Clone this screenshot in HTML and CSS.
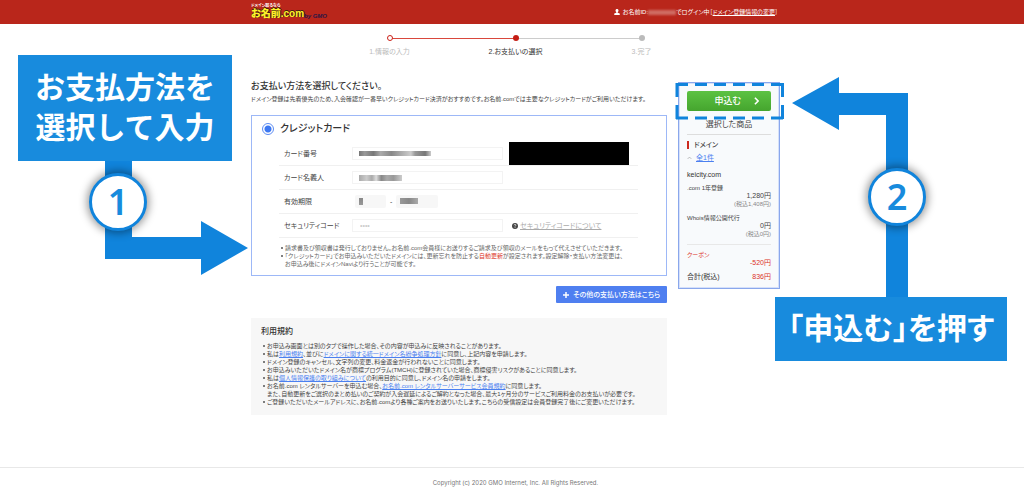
FILE: index.html
```html
<!DOCTYPE html>
<html lang="ja">
<head>
<meta charset="utf-8">
<meta name="viewport" content="width=device-width, initial-scale=1">
<title>お支払いの選択 | お名前.com</title>
<link rel="stylesheet" href="styles.css">
</head>
<body>
<header class="site-header">
  <div class="wrap header-row">
    <a class="logo" href="#">
      <span class="logo-tag">ドメイン取るなら</span>
      <span class="logo-line"><span class="logo-name">お名前.com</span><span class="logo-by">by GMO</span></span>
    </a>
    <p class="login">
      <svg class="person" viewBox="0 0 12 12" aria-hidden="true"><path d="M6 0c2 0 3 1.400 3 3.200C9 4.800 8.300 6 7.400 6.600v.9L11.500 9.200V12H.5V9.200L4.600 7.500v-.9C3.700 6 3 4.800 3 3.200 3 1.400 4 0 6 0z"/></svg>
      <span>お名前ID:</span><span class="masked-id"></span><span>でログイン中［<a href="#">ドメイン登録情報の変更</a>］</span>
    </p>
  </div>
</header>

<div class="wrap">
  <ol class="steps">
    <li class="step done"><span>1.情報の入力</span></li>
    <li class="step current"><span>2.お支払いの選択</span></li>
    <li class="step"><span>3.完了</span></li>
  </ol>

  <div class="columns">
    <main>
      <h1>お支払い方法を選択してください。</h1>
      <p class="lead">ドメイン登録は先着優先のため、入会確認が一番早いクレジットカード決済がおすすめです。お名前.comでは主要なクレジットカードがご利用いただけます。</p>

      <section class="card">
        <label class="method"><input type="radio" name="method" checked>クレジットカード</label>
        <div class="row">
          <label for="number">カード番号</label>
          <input class="box number" id="number" type="text">
          <span class="blackout"></span>
        </div>
        <div class="row">
          <label for="holder">カード名義人</label>
          <input class="box holder" id="holder" type="text">
        </div>
        <div class="row">
          <label for="month">有効期限</label>
          <div class="expiry">
            <select class="month" id="month"><option></option></select>
            <span>-</span>
            <select class="year" aria-label="年"><option></option></select>
          </div>
        </div>
        <div class="row">
          <label for="code">セキュリティコード</label>
          <input class="box" id="code" type="text" placeholder="••••">
          <div class="help">
            <svg viewBox="0 0 14 14" aria-hidden="true"><circle cx="7" cy="7" r="7" fill="#444"/><path d="M4.800 5.200C5 2.600 9.300 2.700 9.200 5.200 9.100 6.700 7.100 6.600 7.100 8.300" fill="none" stroke="#fff" stroke-width="1.700"/><circle cx="7.100" cy="10.600" r="1.100" fill="#fff"/></svg>
            <a href="#">セキュリティコードについて</a>
          </div>
        </div>
        <ul class="notes">
          <li>請求書及び領収書は発行しておりません。お名前.com会員様にお送りするご請求及び領収のメールをもって代えさせていただきます。</li>
          <li>「クレジットカード」でお申込みいただいたドメインには、更新忘れを防止する<em>自動更新</em>が設定されます。設定解除・支払い方法変更は、<br>お申込み後にドメインNaviより行うことが可能です。</li>
        </ul>
      </section>

      <div class="other-row">
        <button class="other" type="button"><svg viewBox="0 0 12 12" aria-hidden="true"><path d="M4.500 0h3v4.500H12v3H7.500V12h-3V7.500H0v-3h4.500z"/></svg>その他の支払い方法はこちら</button>
      </div>

      <section class="terms">
        <h2>利用規約</h2>
        <ul>
          <li>お申込み画面とは別のタブで操作した場合、その内容が申込みに反映されることがあります。</li>
          <li>私は<a href="#">利用規約</a>、並びに<a href="#">ドメインに関する統一ドメイン名紛争処理方針</a>に同意し、上記内容を申請します。</li>
          <li>ドメイン登録のキャンセル、文字列の変更、料金返金が行われないことに同意します。</li>
          <li>お申込みいただいたドメイン名が商標プログラム(TMCH)に登録されていた場合、商標侵害リスクがあることに同意します。</li>
          <li>私は<a href="#">個人情報保護の取り組みについて</a>の利用目的に同意し、ドメイン名の申請をします。</li>
          <li>お名前.com レンタルサーバーを申込む場合、<a href="#">お名前.com レンタルサーバーサービス会員規約</a>に同意します。<br>また、自動更新をご選択のまとめ払いのご契約が入会遅延によるご解約となった場合、最大1ヶ月分のサービスご利用料金のお支払いが必要です。</li>
          <li>ご登録いただいたメールアドレスに、お名前.comより各種ご案内をお送りいたします。こちらの受信設定は会員登録完了後にご変更いただけます。</li>
        </ul>
      </section>
    </main>

    <aside class="cart">
      <button class="apply" type="button">申込む<svg viewBox="0 0 6 10" aria-hidden="true"><path d="M1 1l4 4-4 4"/></svg></button>
      <h2>選択した商品</h2>
      <h3>ドメイン</h3>
      <p class="count"><svg viewBox="0 0 8 5" aria-hidden="true"><path d="M1 4l3-3 3 3"/></svg><a href="#">全1件</a></p>
      <p class="domain">keicity.com</p>
      <div class="item">
        <p>.com 1年登録</p>
        <p class="price">1,280円</p>
        <p class="tax">(税込1,408円)</p>
      </div>
      <div class="item">
        <p>Whois情報公開代行</p>
        <p class="price">0円</p>
        <p class="tax">(税込0円)</p>
      </div>
      <div class="coupon">
        <p>クーポン</p>
        <p class="price">-520円</p>
      </div>
      <p class="total"><span>合計(税込)</span><span class="sum">836円</span></p>
    </aside>
  </div>
</div>

<footer class="site-footer"><div class="wrap">Copyright (c) 2020 GMO Internet, Inc. All Rights Reserved.</div></footer>

<div class="guide">
  <svg class="arrows" viewBox="0 0 1024 497" aria-hidden="true">
    <path d="M105 150H132V237H201V221L248 248 201 275V259H105z"/>
    <path d="M908 300V93H839V77L792 103 839 130V115H886V300z"/>
    <path class="dashes" d="M676 84.500H783M676 118H783"/>
    <path class="dashes-side" d="M677 83V119.500M782.500 83V119.500"/>
  </svg>
  <p class="callout callout-pay">お支払方法を<br>選択して入力</p>
  <p class="callout callout-apply">「申込む」を押す</p>
  <span class="badge badge-one">1</span>
  <span class="badge badge-two">2</span>
</div>
</body>
</html>
```

FILE: styles.css
```css
*, *::before, *::after { box-sizing: border-box; }

body, h1, h2, h3, p, ul, ol { margin: 0; padding: 0; }
ul, ol { list-style: none; }

body {
  position: relative;
  overflow-x: hidden;
  background: #fff;
  color: #444;
  font: 6px/8px "Liberation Sans", "Noto Sans CJK JP", sans-serif;
  font-feature-settings: "palt";
}

button, input, select { font: inherit; font-feature-settings: inherit; color: inherit; margin: 0; }
a { color: #4a80f0; }
h1, h2, h3 { font-weight: 500; }

.wrap {
  max-width: 536px;
  margin: 0 auto;
  padding-left: 7px;
}

/* header */
.site-header { background: #b9261b; color: #fff; }
.header-row { display: flex; justify-content: space-between; height: 24px; }
.logo { display: block; padding-top: 3px; color: #fff; text-decoration: none; }
.logo-tag { display: block; font-size: 4px; font-weight: 700; line-height: 5px; }
.logo-line { display: flex; align-items: flex-end; line-height: 12px; }
.logo-name {
  color: #fff32a;
  font-size: 10px;
  font-weight: 900;
  text-shadow: 1px 0 #3a2310, 0 -1px #3a2310;
}
.logo-by { color: #2b1745; font-size: 6px; font-style: italic; font-weight: 700; line-height: 8px; }
.login { display: flex; align-items: center; padding-right: 2px; }
.login a { color: #fff; }
.person { width: 6px; height: 6px; margin-right: 3px; fill: #fff; }
.masked-id { width: 28px; height: 5px; background: #cf6b62; filter: blur(1px); }

/* steps */
.steps { display: flex; width: 378px; margin: 11px auto 0; }
.step {
  position: relative;
  flex: 1;
  padding-top: 10px;
  color: #bbb;
  font-size: 7px;
  text-align: center;
}
.step::before {
  content: "";
  position: absolute;
  z-index: 1;
  top: 0;
  left: 50%;
  width: 6px;
  height: 6px;
  margin-left: -3px;
  border-radius: 50%;
  background: #bbb;
}
.step:not(:last-child)::after {
  content: "";
  position: absolute;
  top: 3px;
  left: 50%;
  width: 100%;
  height: 1px;
  background: #ccc;
}
.step.done::before { border: 1px solid #cc2018; background: #fff; }
.step.done::after { background: #d9473d; }
.step.current { color: #333; }
.step.current::before { background: #c41d14; }
.step span { display: block; padding-top: 3px; }

.columns {
  display: grid;
  grid-template-columns: minmax(0, 1fr) 102px;
  gap: 11px;
  align-items: start;
  padding-top: 24px;
}

/* payment */
h1 { color: #333; font-size: 9px; line-height: 12px; }
main { min-width: 0; }
.lead { padding-top: 3px; white-space: nowrap; }
.card { margin-top: 12px; padding: 6px 28px 7px 27px; border: 1px solid #9db8f7; }
.cart { margin-top: 2px; }
.method {
  display: flex;
  align-items: center;
  gap: 6px;
  height: 13px;
  margin-left: -17px;
  color: #333;
  font-size: 10px;
  font-weight: 500;
}
.method input {
  appearance: none;
  width: 12px;
  height: 12px;
  border: 1px solid #5d8df3;
  border-radius: 50%;
  background: radial-gradient(circle, #3d78f2 3px, #fff 4px);
}
.method + .row { margin-top: 7px; }
.row {
  display: flex;
  align-items: center;
  height: 24px;
  padding-left: 5px;
  border-bottom: 1px solid #f0f0f0;
  font-size: 7px;
}
.row > label { flex: 0 0 68px; }
.box {
  width: 151px;
  height: 13px;
  padding: 0 7px;
  border: 1px solid #f3f3f3;
  background: #fff;
}
.box::placeholder { color: #ccc; }
.number {
  background: linear-gradient(90deg, #777, #999 8%, #777 20%, #aaa 30%, #888 45%, #aaa 58%, #ccc 72%, #999 78%, #777 92%, #ccc) 6px 3px / 72px 5px no-repeat;
}
.holder {
  background: linear-gradient(90deg, #aaa, #ccc 18%, #aaa 30%, #ddd 40%, #888 52%, #aaa 65%, #999 80%, #ccc) 6px 3px / 43px 6px no-repeat;
}
.blackout { width: 120px; height: 23px; margin-left: 6px; background: #000; }
.expiry { display: flex; align-items: center; gap: 4px; padding-left: 3px; }
.expiry select { appearance: none; height: 13px; border: 0; border-radius: 2px; background: #f7f7f7; }
.expiry .month { width: 31px; background: linear-gradient(#888, #999) 4px 3px / 4px 7px no-repeat #f7f7f7; }
.expiry .year { width: 42px; background: linear-gradient(90deg, #999, #888 50%, #aaa) 4px 3px / 18px 6px no-repeat #f7f7f7; }
.help { display: flex; align-items: center; gap: 2px; margin-left: 9px; }
.help svg { width: 6px; height: 6px; }
.help a { color: #aaa; }
.notes { padding-top: 6px; color: #666; white-space: nowrap; }
.notes li, .terms li { position: relative; padding-left: 6px; }
.notes li::before, .terms li::before {
  content: "";
  position: absolute;
  top: 3px;
  left: 2px;
  width: 2px;
  height: 2px;
  border-radius: 50%;
  background: #555;
}
.notes em { color: #dc3328; font-style: normal; }

.other-row { display: flex; justify-content: flex-end; padding-top: 10px; }
.other {
  display: flex;
  align-items: center;
  gap: 4px;
  height: 17px;
  padding: 0 7px;
  border: 0;
  border-radius: 1px;
  background: #4f7ff0;
  color: #fff;
  font-size: 7px;
  font-weight: 500;
}
.other svg { width: 6px; height: 6px; fill: #fff; }

.terms { margin-top: 15px; padding: 8px 10px 9px; background: #f7f7f7; }
.terms h2 { color: #333; font-size: 8px; line-height: 12px; }
.terms ul { padding-top: 4px; white-space: nowrap; }

/* cart */
.cart {
  padding: 8px 8px 7px;
  border: 1px solid #8aa7ec;
  outline: 1px solid #d5e0fa;
  outline-offset: -2px;
  background: #f8fafc;
  font-size: 7px;
}
.apply {
  display: flex;
  align-items: center;
  justify-content: flex-end;
  gap: 13px;
  width: 100%;
  height: 20px;
  padding: 0 12px;
  border: 0;
  border-radius: 2px;
  background: linear-gradient(#5cc243, #45a52e);
  color: #fff;
  font-size: 9px;
  font-weight: 500;
}
.apply svg { width: 5px; height: 8px; fill: none; stroke: #fff; stroke-width: 2; }
.cart h2 { padding: 9px 0 4px; border-bottom: 1px solid #ddd; font-size: 8px; line-height: 10px; text-align: center; font-weight: 400; }
.cart h3 { margin-top: 6px; padding-left: 5px; border-left: 2px solid #cc2a1f; font-size: 7px; }
.count { display: flex; align-items: center; gap: 4px; padding-top: 5px; }
.count svg { width: 5px; height: 4px; fill: none; stroke: #999; }
.domain { padding-top: 9px; color: #333; font-size: 7px; }
.item { padding-top: 5px; font-size: 6px; }
.item + .item { padding-top: 6px; }
.price { text-align: right; font-size: 7px; }
.tax { color: #888; text-align: right; font-size: 6px; }
.coupon { margin-top: 6px; padding-top: 6px; border-top: 1px solid #e8e8e8; color: #dc3328; font-size: 6px; }
.total { display: flex; justify-content: space-between; padding-top: 6px; color: #333; }
.sum { color: #dc3328; }

/* footer */
.site-footer {
  margin-top: 52px;
  padding: 11px 0 9px;
  border-top: 1px solid #e8e8e8;
  color: #777;
  font-family: Inter, sans-serif;
  text-align: center;
}

/* guide layer drawn over the page */
.guide {
  position: absolute;
  top: 0;
  left: 50%;
  width: 1024px;
  margin-left: -512px;
  pointer-events: none;
}
.arrows { display: block; width: 1024px; fill: #1084dc; }
.dashes, .dashes-side { fill: none; stroke: #1084dc; stroke-width: 3; }
.dashes { stroke-dasharray: 12 7; }
.dashes-side { stroke-dasharray: 14 8; }
.callout {
  position: absolute;
  background: #188bdd;
  color: #fff;
  font: 700 30px/40px "Noto Sans CJK JP", sans-serif;
  text-align: center;
  white-space: nowrap;
}
.callout-pay { top: 55px; left: 18px; padding: 10px 17px 16px; }
.callout-apply { top: 297px; left: 775px; width: 232px; padding: 9px 0 15px; font-feature-settings: "palt"; }
.badge {
  position: absolute;
  display: flex;
  align-items: center;
  justify-content: center;
  width: 58px;
  height: 58px;
  border: 3px solid #1084dc;
  border-radius: 50%;
  background: #fff;
  box-shadow: 0 0 8px 2px rgba(0, 0, 0, .4);
  color: #188bdd;
  font: 600 36px/36px "Noto Sans", sans-serif;
}
.badge-one { top: 173px; left: 89px; }
.badge-two { top: 168px; left: 868px; }
```
